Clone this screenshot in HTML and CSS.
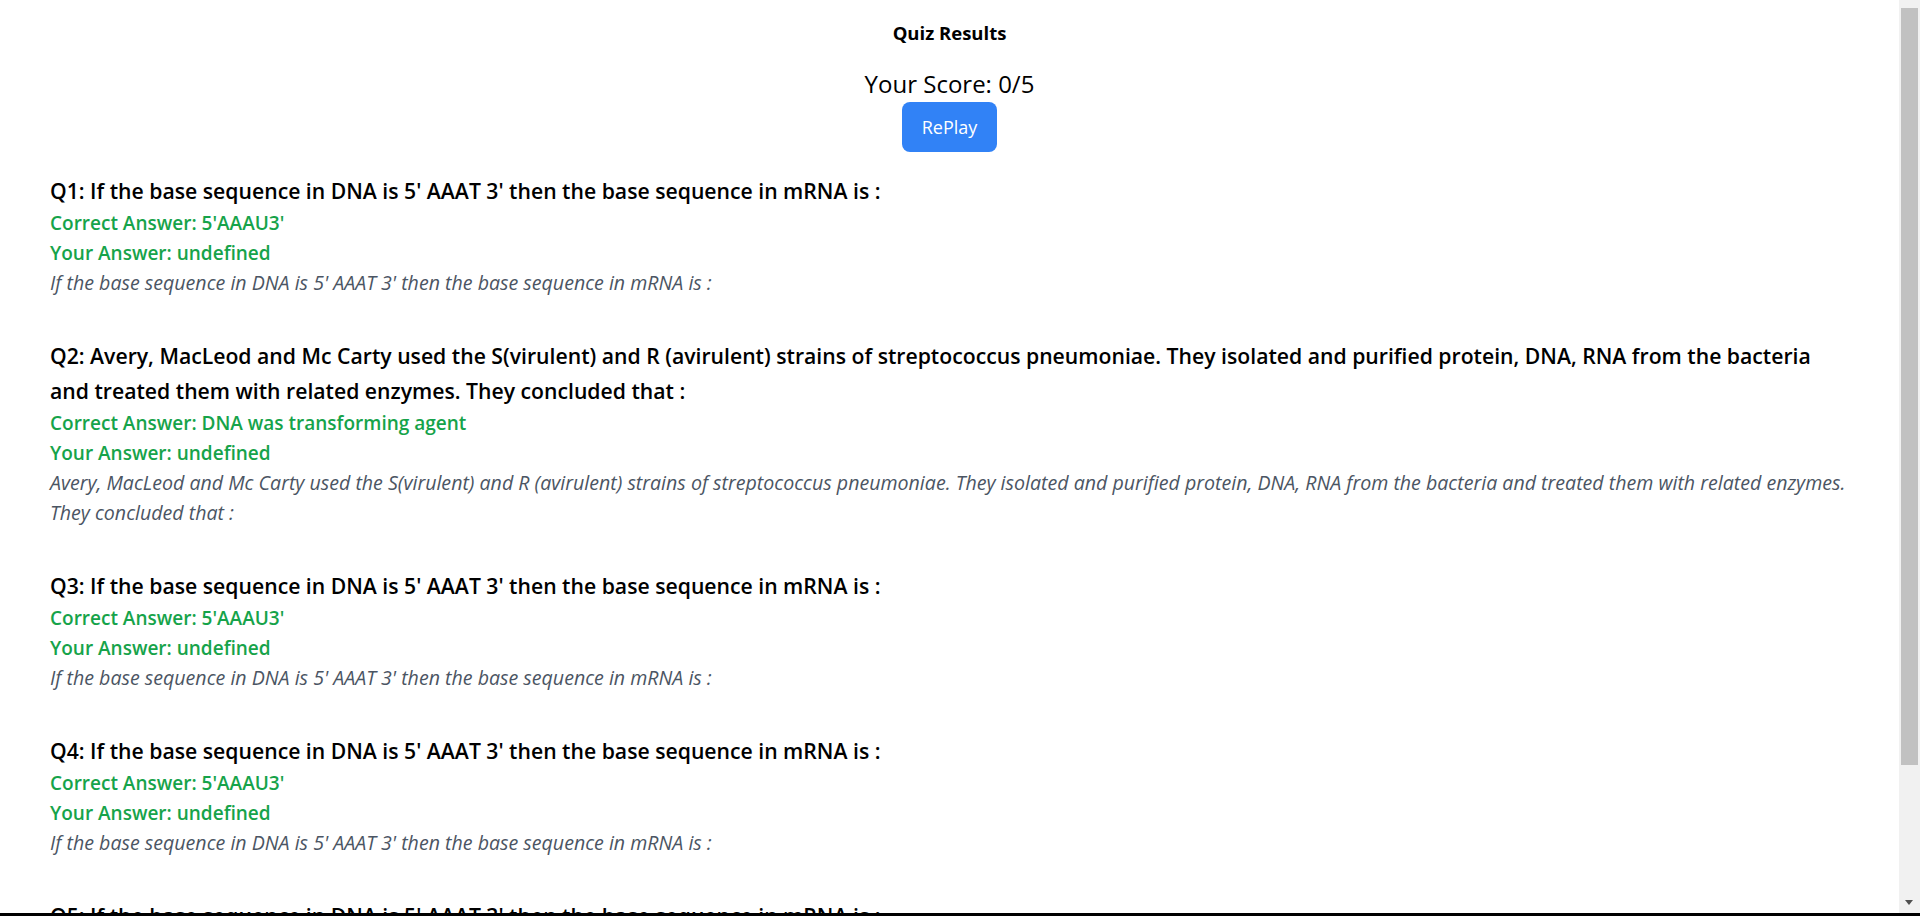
FILE: index.html
```html
<!DOCTYPE html>
<html lang="en">
<head>
<meta charset="utf-8">
<title>Quiz Results</title>
<link rel="stylesheet" href="styles.css">
</head>
<body>
<main class="results">
  <header class="results-head">
    <h1 class="title">Quiz Results</h1>
    <p class="score">Your Score: 0/5</p>
    <button class="replay" type="button">RePlay</button>
  </header>

  <section class="question">
    <h2 class="q-text">Q1: If the base sequence in DNA is 5' AAAT 3' then the base sequence in mRNA is :</h2>
    <p class="answer">Correct Answer: 5'AAAU3'</p>
    <p class="answer">Your Answer: undefined</p>
    <p class="explain">If the base sequence in DNA is 5' AAAT 3' then the base sequence in mRNA is :</p>
  </section>

  <section class="question">
    <h2 class="q-text">Q2: Avery, MacLeod and Mc Carty used the S(virulent) and R (avirulent) strains of streptococcus pneumoniae. They isolated and purified protein, DNA, RNA from the bacteria and treated them with related enzymes. They concluded that :</h2>
    <p class="answer">Correct Answer: DNA was transforming agent</p>
    <p class="answer">Your Answer: undefined</p>
    <p class="explain">Avery, MacLeod and Mc Carty used the S(virulent) and R (avirulent) strains of streptococcus pneumoniae. They isolated and purified protein, DNA, RNA from the bacteria and treated them with related enzymes. They concluded that :</p>
  </section>

  <section class="question">
    <h2 class="q-text">Q3: If the base sequence in DNA is 5' AAAT 3' then the base sequence in mRNA is :</h2>
    <p class="answer">Correct Answer: 5'AAAU3'</p>
    <p class="answer">Your Answer: undefined</p>
    <p class="explain">If the base sequence in DNA is 5' AAAT 3' then the base sequence in mRNA is :</p>
  </section>

  <section class="question">
    <h2 class="q-text">Q4: If the base sequence in DNA is 5' AAAT 3' then the base sequence in mRNA is :</h2>
    <p class="answer">Correct Answer: 5'AAAU3'</p>
    <p class="answer">Your Answer: undefined</p>
    <p class="explain">If the base sequence in DNA is 5' AAAT 3' then the base sequence in mRNA is :</p>
  </section>

  <section class="question">
    <h2 class="q-text">Q5: If the base sequence in DNA is 5' AAAT 3' then the base sequence in mRNA is :</h2>
    <p class="answer">Correct Answer: 5'AAAU3'</p>
    <p class="answer">Your Answer: undefined</p>
    <p class="explain">If the base sequence in DNA is 5' AAAT 3' then the base sequence in mRNA is :</p>
  </section>
</main>

<div class="scrollbar" aria-hidden="true">
  <div class="scroll-thumb"></div>
  <div class="scroll-arrow"></div>
</div>
<div class="window-edge"></div>
</body>
</html>
```

FILE: styles.css
```css
html, body {
  margin: 0;
  padding: 0;
  background: #ffffff;
}

body {
  font-family: "Open Sans", "Noto Sans", sans-serif;
  color: #000000;
  padding-right: 21px;
}

.results {
  padding: 0 50px 40px;
}

.results-head {
  display: flex;
  flex-direction: column;
  align-items: center;
  padding-top: 19px;
  margin-bottom: 21px;
}

.title {
  margin: 0;
  font-size: 18.5px;
  line-height: 27px;
  font-weight: 700;
}

.score {
  margin: 20px 0 0;
  font-size: 24px;
  line-height: 36px;
  font-weight: 400;
}

.replay {
  font-family: inherit;
  font-size: 18px;
  line-height: 26px;
  padding: 12px 20px;
  border: none;
  border-radius: 8px;
  background: #3182f6;
  color: #ffffff;
  cursor: pointer;
}

.question {
  margin-bottom: 40px;
}

.q-text {
  margin: 0;
  font-size: 21.2px;
  line-height: 35px;
  font-weight: 600;
  color: #000000;
}

.answer {
  margin: 0;
  font-size: 19px;
  line-height: 30px;
  font-weight: 600;
  color: #16a34a;
}

.explain {
  margin: 0;
  font-size: 19.6px;
  line-height: 30px;
  font-style: italic;
  color: #4b5563;
}

.scrollbar {
  position: fixed;
  top: 0;
  right: 0;
  bottom: 0;
  width: 21px;
  background: #f1f1f1;
}

.scroll-thumb {
  position: absolute;
  top: 8px;
  left: 2px;
  right: 2px;
  height: 757px;
  background: #c1c1c1;
}

.scroll-arrow {
  position: absolute;
  left: 6px;
  bottom: 11px;
  width: 0;
  height: 0;
  border-left: 4.5px solid transparent;
  border-right: 4.5px solid transparent;
  border-top: 5px solid #505050;
}

.window-edge {
  position: fixed;
  left: 0;
  right: 0;
  bottom: 0;
  height: 3px;
  background: #000000;
}
```
